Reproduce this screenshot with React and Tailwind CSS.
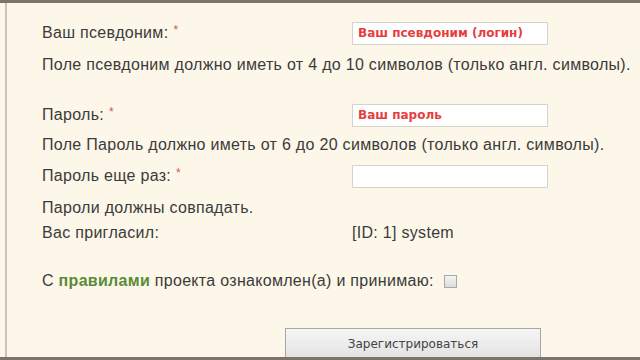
import React from "react"

const Star = () => <span className="text-[#d9534f] ml-[5px] text-[12px] align-top">*</span>

export default function App() {
    return (
        <div className="w-[640px] h-[360px] overflow-hidden bg-[#fcf7e9] border-t-[3px] border-b-[3px] border-[#7c746b] pl-[5px] font-['Liberation_Sans',Arial,sans-serif] text-[16px] tracking-[0.3px] text-[#3b3b3b]">
            <div className="h-full border-l-2 border-[#c9c4ba] pl-[35px] pt-[18px]">
                <div className="flex items-center h-[24px]">
                    <div className="w-[310px]">Ваш псевдоним:<Star /></div>
                    <input
                        placeholder="Ваш псевдоним (логин)"
                        className="w-[196px] h-[23px] bg-white border border-[#d6d2cc] px-[5px] text-[12px] tracking-normal font-bold font-['DejaVu_Sans',sans-serif] placeholder:text-[#e63e3e] outline-none"
                    />
                </div>
                <div className="h-[20px] leading-[20px] mt-[10px] whitespace-nowrap">Поле псевдоним должно иметь от 4 до 10 символов (только англ. символы).</div>

                <div className="flex items-center h-[24px] mt-[28px]">
                    <div className="w-[310px]">Пароль:<Star /></div>
                    <input
                        placeholder="Ваш пароль"
                        className="w-[196px] h-[23px] bg-white border border-[#d6d2cc] px-[5px] text-[12px] tracking-normal font-bold font-['DejaVu_Sans',sans-serif] placeholder:text-[#e63e3e] outline-none"
                    />
                </div>
                <div className="h-[20px] leading-[20px] mt-[8px] whitespace-nowrap">Поле Пароль должно иметь от 6 до 20 символов (только англ. символы).</div>

                <div className="flex items-center h-[24px] mt-[9px]">
                    <div className="w-[310px]">Пароль еще раз:<Star /></div>
                    <input className="w-[196px] h-[23px] bg-white border border-[#d6d2cc] outline-none" />
                </div>
                <div className="h-[20px] leading-[20px] mt-[10px]">Пароли должны совпадать.</div>

                <div className="flex items-center h-[20px] mt-[5px]">
                    <div className="w-[310px]">Вас пригласил:</div>
                    <div>[ID: 1] system</div>
                </div>

                <div className="flex items-center h-[20px] mt-[28px]">
                    <span>С <b className="text-[#5b8a3a]">правилами</b> проекта ознакомлен(а) и принимаю:</span>
                    <span className="ml-[10px] w-[13px] h-[13px] border border-[#a9a9a9] bg-gradient-to-b from-[#f4f4f4] to-[#dcdcdc]"></span>
                </div>

                <button className="mt-[37px] ml-[243px] w-[256px] h-[32px] border border-[#a6a6a6] bg-gradient-to-b from-[#f6f6f6] to-[#e2e2e2] text-[12px] tracking-normal text-[#444] font-['DejaVu_Sans',sans-serif]">
                    Зарегистрироваться
                </button>
            </div>
        </div>
    )
}
